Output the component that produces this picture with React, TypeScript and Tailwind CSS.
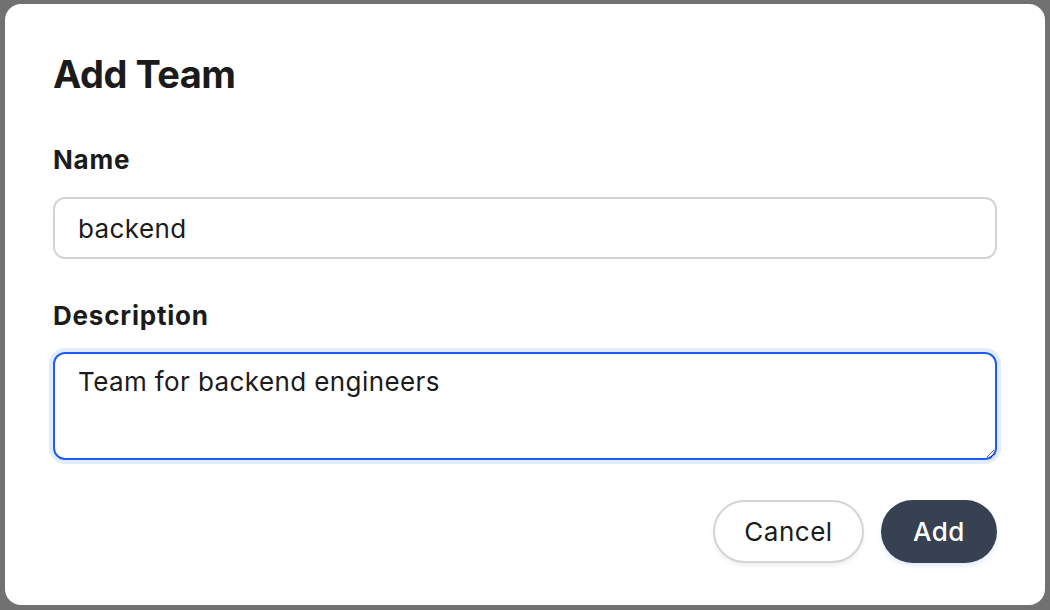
import React from "react";

const App: React.FC = () => {
  return (
    <div
      className="w-[1050px] h-[610px] bg-[#717171] pt-[4px] pl-[5px]"
      style={{ fontFamily: "Inter, 'Noto Sans', sans-serif" }}
    >
      <div className="w-[1040px] h-[601px] bg-white rounded-[16px] px-[48px] pt-[48px] text-[#1b1b1b]">
        {/* Title */}
        <h2 className="text-[38px] leading-[44px] font-bold tracking-[-0.5px]">Add Team</h2>

        {/* Name */}
        <label className="block mt-[48px] text-[26px] leading-[32px] font-bold tracking-[0.8px]">Name</label>
        <input
          type="text"
          defaultValue="backend"
          className="mt-[21px] block w-full h-[62px] rounded-[12px] border-2 border-[#d4d4d4] px-[23px] text-[26px] tracking-[0.4px] text-[#1b1b1b] outline-none"
        />

        {/* Description */}
        <label className="block mt-[41px] text-[26px] leading-[32px] font-bold tracking-[0.8px]">Description</label>
        <textarea
          defaultValue="Team for backend engineers"
          autoFocus
          className="mt-[20px] block w-full h-[108px] rounded-[12px] border-2 border-[#1d5cf5] shadow-[0_0_0_4px_#e1ecff] px-[23px] pt-[12px] text-[26px] leading-[32px] tracking-[0.4px] text-[#1b1b1b] caret-black outline-none"
        />

        {/* Actions */}
        <div className="flex justify-end gap-[17px] mt-[40px]">
          <button className="w-[151px] h-[63px] rounded-full border-2 border-[#d4d4d4] bg-white text-[26px] tracking-[0.5px] text-[#1b1b1b] shadow-[0_3px_4px_rgba(0,0,0,0.06)]">
            Cancel
          </button>
          <button className="w-[116px] h-[63px] rounded-full bg-[#374151] text-[26px] tracking-[0.5px] font-medium text-white shadow-[0_3px_4px_rgba(59,130,246,0.15)]">
            Add
          </button>
        </div>
      </div>
    </div>
  );
};

export default App;
